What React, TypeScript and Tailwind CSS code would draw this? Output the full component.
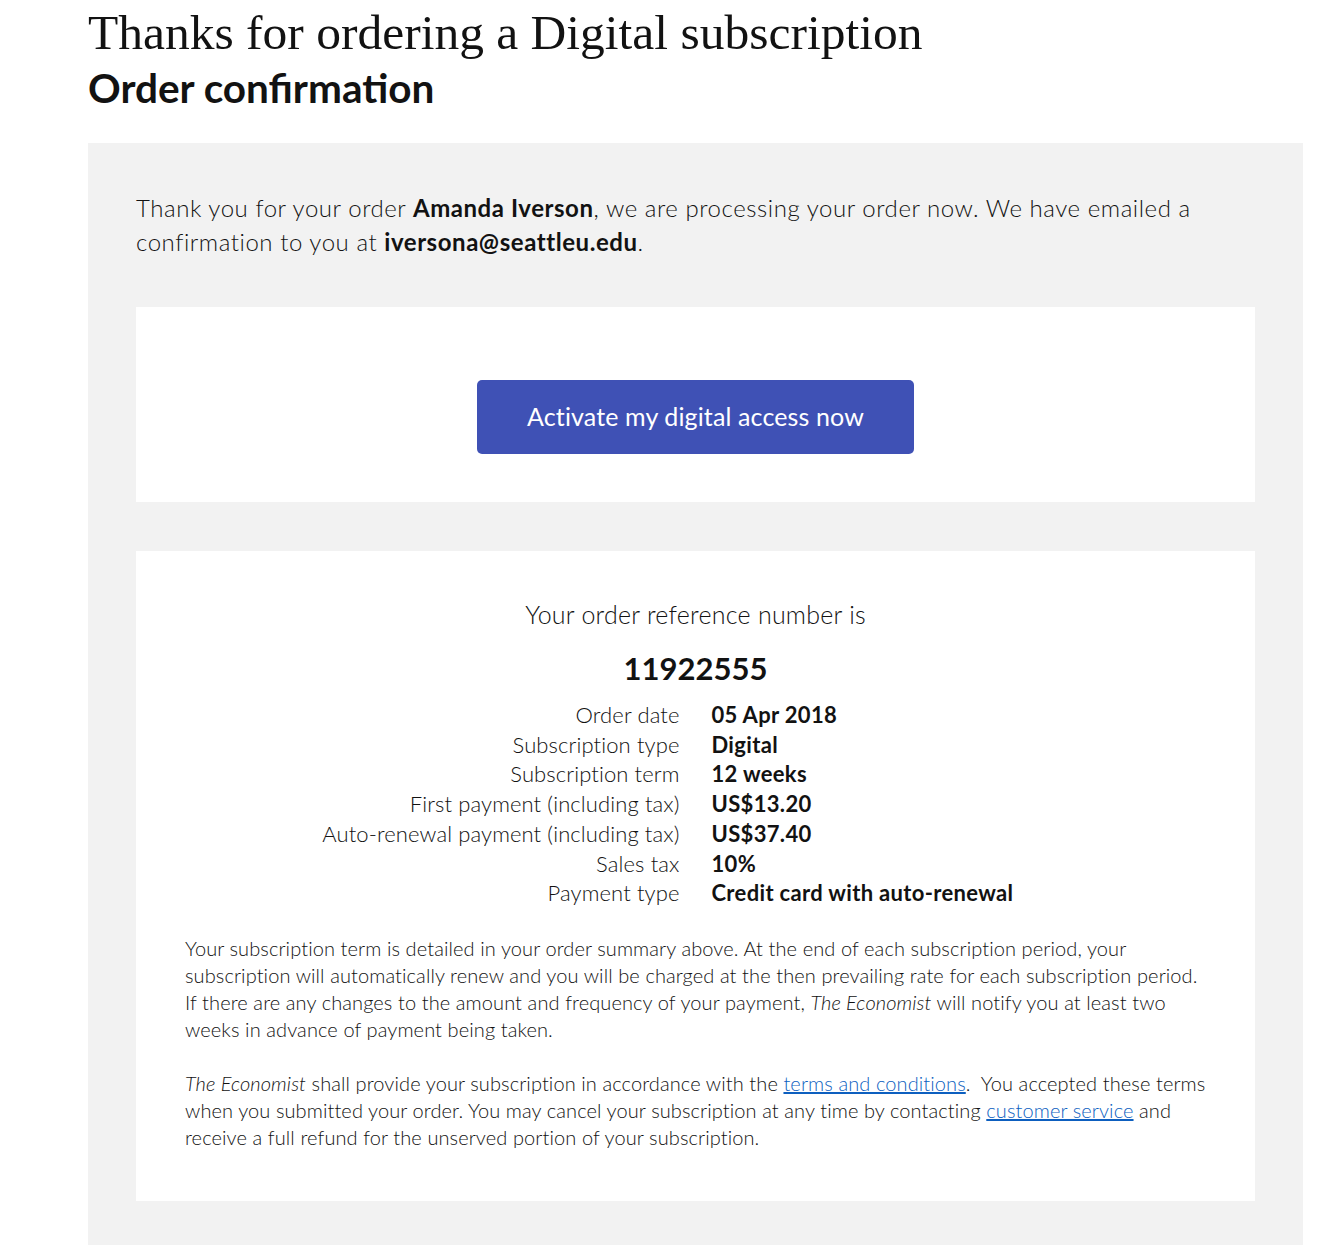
import React from "react";

const DETAILS: { label: string; value: string }[] = [
  { label: "Order date", value: "05 Apr 2018" },
  { label: "Subscription type", value: "Digital" },
  { label: "Subscription term", value: "12 weeks" },
  { label: "First payment (including tax)", value: "US$13.20" },
  { label: "Auto-renewal payment (including tax)", value: "US$37.40" },
  { label: "Sales tax", value: "10%" },
  { label: "Payment type", value: "Credit card with auto-renewal" },
];

export default function App() {
  return (
    <div className="min-h-[1245px] bg-white text-[#121212] font-['Lato',sans-serif]">
      <div className="pl-[88px] pr-[15px]">
        {/* Headings */}
        <h1 className="pt-[4px] font-['Liberation_Serif',serif] text-[49.5px] leading-[58px]">
          Thanks for ordering a Digital subscription
        </h1>
        <h2 className="font-['Lato',sans-serif] font-bold text-[40.5px] leading-[52px]">
          Order confirmation
        </h2>

        {/* Grey panel */}
        <div className="mt-[29px] bg-[#f2f2f2] px-[48px] pt-[48px] pb-[60px]">
          <p className="text-[24px] leading-[34px] font-light tracking-[0.023em]">
            Thank you for your order <strong className="font-bold">Amanda Iverson</strong>, we are
            processing your order now. We have emailed a confirmation to you at{" "}
            <strong className="font-bold">iversona@seattleu.edu</strong>.
          </p>

          {/* Activate card */}
          <div className="mt-[48px] bg-white flex justify-center pt-[73px] pb-[48px]">
            <button
              type="button"
              className="w-[437px] h-[74px] rounded-[5px] bg-[#3f51b5] text-white text-[25px] tracking-[0.005em]"
            >
              Activate my digital access now
            </button>
          </div>

          {/* Order details card */}
          <div className="mt-[49px] bg-white px-[49px] pt-[46px] pb-[50px]">
            <p className="text-center text-[25px] leading-[34px] font-light tracking-[0.01em]">
              Your order reference number is
            </p>
            <p className="mt-[17px] text-center text-[31px] leading-[40px] font-bold">11922555</p>

            <div className="mt-[12px] grid grid-cols-2 gap-x-[32px]">
              {DETAILS.map((row) => (
                <React.Fragment key={row.label}>
                  <div className="text-right text-[22px] leading-[29.7px] font-light tracking-[0.005em]">
                    {row.label}
                  </div>
                  <div className="text-left text-[22px] leading-[29.7px] font-bold tracking-[0.015em]">
                    {row.value}
                  </div>
                </React.Fragment>
              ))}
            </div>

            <div className="mt-[27px] text-[20px] leading-[27px] font-light tracking-[0.005em]">
              <p>
                Your subscription term is detailed in your order summary above. At the end of each
                subscription period, your subscription will automatically renew and you will be
                charged at the then prevailing rate for each subscription period. If there are any
                changes to the amount and frequency of your payment, <em>The Economist</em> will
                notify you at least two weeks in advance of payment being taken.
              </p>
              <p className="mt-[27px]">
                <em>The Economist</em> shall provide your subscription in accordance with the{" "}
                <a href="#" className="text-[#0d5fbf] underline">
                  terms and conditions
                </a>
                .&nbsp; You accepted these terms when you submitted your order. You may cancel your
                subscription at any time by contacting{" "}
                <a href="#" className="text-[#0d5fbf] underline">
                  customer service
                </a>{" "}
                and receive a full refund for the unserved portion of your subscription.
              </p>
            </div>
          </div>
        </div>
      </div>
    </div>
  );
}
